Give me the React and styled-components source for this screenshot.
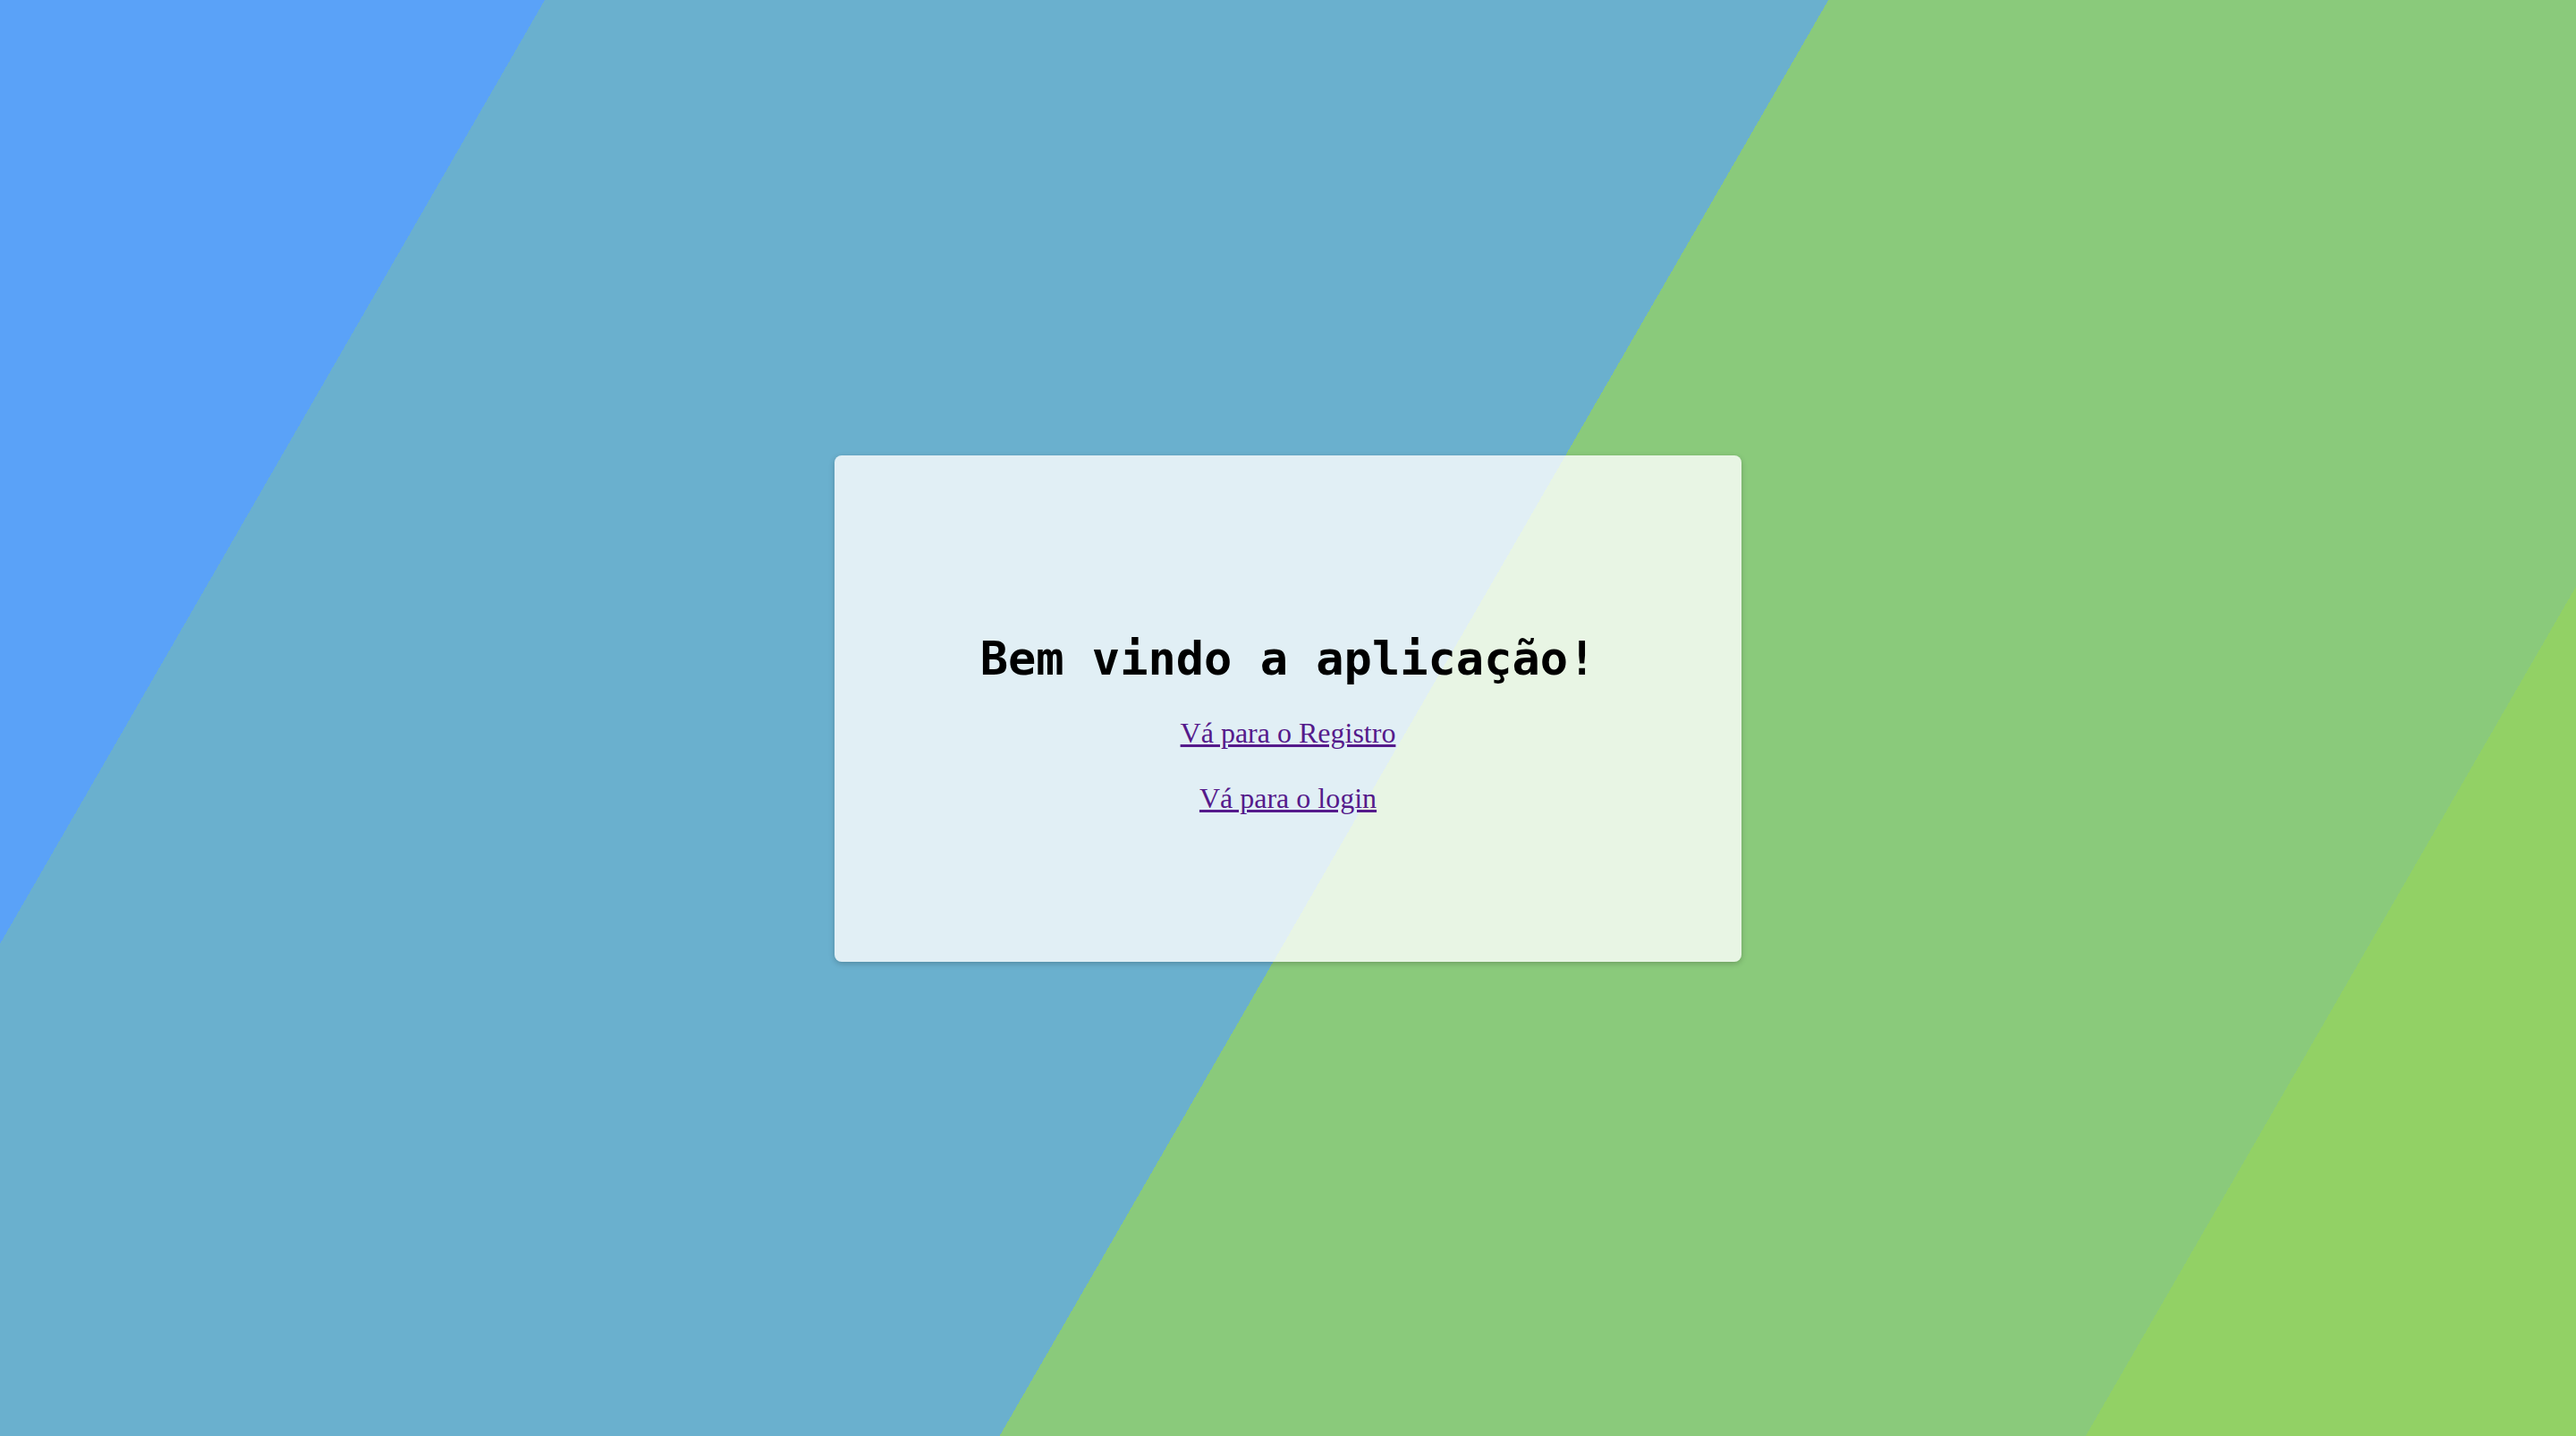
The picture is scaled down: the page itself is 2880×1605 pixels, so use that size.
import React from 'react';
import styled, {createGlobalStyle} from "styled-components";

const GlobalStyle = createGlobalStyle`
  html, body {
    margin: 0;
    padding: 0;
  }
  body {
    font-family: "Liberation Serif", "Times New Roman", serif;
  }
  * {
    box-sizing: border-box;
  }
`;

const links = [
    {href: "#registro", label: "Vá para o Registro"},
    {href: "#login", label: "Vá para o login"}
];

export default function App() {
    return (
        <Page>
            <GlobalStyle/>
            <Card>
                <Title>Bem vindo a aplicação!</Title>
                <LinkList>
                    {links.map(link => (
                        <NavLink key={link.href} href={link.href}>
                            {link.label}
                        </NavLink>
                    ))}
                </LinkList>
            </Card>
        </Page>
    );
}

const Page = styled.main`
  min-height: 100vh;
  display: flex;
  align-items: center;
  justify-content: center;
  padding-bottom: 21px;
  background: linear-gradient(
    120deg,
    #5aa2f8 16%,
    #6ab0ce 16%,
    #6ab0ce 53.7%,
    #8aca7b 53.7%,
    #8aca7b 85.6%,
    #92d165 85.6%
  );
`;

const Card = styled.section`
  width: 1014px;
  height: 566px;
  padding-top: 32px;
  display: flex;
  flex-direction: column;
  align-items: center;
  justify-content: center;
  background: rgba(255, 255, 255, 0.8);
  border-radius: 8px;
  box-shadow: 0 2px 6px rgba(0, 0, 0, 0.22);
`;

const Title = styled.h1`
  margin: 0 0 35px;
  font-family: "DejaVu Sans Mono", "Liberation Mono", monospace;
  font-weight: bold;
  font-size: 52px;
  line-height: normal;
  color: #000;
`;

const LinkList = styled.nav`
  display: flex;
  flex-direction: column;
  align-items: center;
  gap: 37px;
`;

const NavLink = styled.a`
  font-family: "Liberation Serif", "Times New Roman", serif;
  font-size: 32px;
  line-height: 36px;
  color: #551a8b;
  text-decoration: underline;
`;
